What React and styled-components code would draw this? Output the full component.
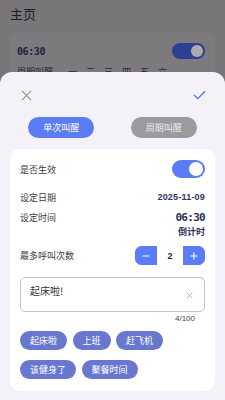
import React, { useState } from "react";
import styled, { createGlobalStyle } from "styled-components";

const Global = createGlobalStyle`
  html, body { margin: 0; padding: 0; }
  body {
    width: 225px;
    height: 400px;
    overflow: hidden;
    font-family: "Noto Sans CJK SC", "Noto Sans", sans-serif;
    background: #787679;
  }
  * { box-sizing: border-box; }
`;

const Screen = styled.div`
  position: relative;
  width: 225px;
  height: 400px;
  overflow: hidden;
  background: #787679;
`;

/* ---------- dimmed page behind the sheet ---------- */
const PageTitle = styled.div`
  height: 28px;
  padding: 4px 10px 0;
  font-size: 13px;
  line-height: 20px;
  color: #1e1e20;
`;

const BehindCard = styled.div`
  margin: 4px 10px 0;
  height: 80px;
  border-radius: 8px;
  background: #7c7a7c;
  padding: 11px 10px 0 7px;
`;

const BehindRow = styled.div`
  display: flex;
  align-items: center;
  justify-content: space-between;
`;

const BehindTime = styled.div`
  font-family: "DejaVu Sans Mono", monospace;
  font-weight: 700;
  font-size: 10px;
  letter-spacing: -0.4px;
  color: #1c2147;
`;

const BehindSwitch = styled.div`
  width: 33px;
  height: 16px;
  border-radius: 8px;
  background: #2d4190;
  padding: 2px;
  display: flex;
  justify-content: flex-end;
  &::after {
    content: "";
    width: 12px;
    height: 12px;
    border-radius: 50%;
    background: #acacac;
  }
`;

const BehindDays = styled.div`
  margin-top: 6px;
  display: flex;
  gap: 9px;
  font-size: 9px;
  color: #2a2a2c;
  span:first-child { margin-right: 6px; }
`;

/* ---------- bottom sheet ---------- */
const Sheet = styled.div`
  position: absolute;
  left: 0;
  right: 0;
  top: 72px;
  bottom: 0;
  background: #f4f1f8;
  border-radius: 12px 12px 0 0;
  display: flex;
  flex-direction: column;
`;

const SheetHeader = styled.div`
  display: flex;
  align-items: center;
  justify-content: space-between;
  padding: 16px 18px 0 18px;
  height: 30px;
`;

const IconButton = styled.button`
  border: 0;
  background: none;
  padding: 0;
  width: 16px;
  height: 14px;
  display: flex;
  align-items: center;
  justify-content: center;
  cursor: pointer;
`;

const Tabs = styled.div`
  display: flex;
  padding: 0 10px;
  margin-top: 15px;
`;

const TabCell = styled.div`
  flex: 1;
  display: flex;
  justify-content: center;
`;

const TabButton = styled.button`
  width: 66px;
  height: 21px;
  border: 0;
  border-radius: 11px;
  background: ${(p) => (p.$active ? "#5b7cf4" : "#9b9a9c")};
  color: ${(p) => (p.$active ? "#ffffff" : "#ececec")};
  font-family: "Noto Sans CJK SC", sans-serif;
  font-size: 9px;
  padding: 0;
  cursor: pointer;
`;

const Card = styled.div`
  margin: 11px 10px 0;
  background: #ffffff;
  border-radius: 10px;
  padding: 11px 10px 12px;
`;

const Row = styled.div`
  display: flex;
  align-items: center;
  justify-content: space-between;
  height: ${(p) => p.$h || 18}px;
  margin-top: ${(p) => p.$mt || 0}px;
`;

const Label = styled.span`
  font-size: 9px;
  color: #3a3a3e;
`;

const DateValue = styled.span`
  font-family: "Liberation Sans", Arial, sans-serif;
  font-weight: 700;
  font-size: 9px;
  color: #30355f;
  letter-spacing: 0.2px;
`;

const TimeValue = styled.span`
  font-family: "DejaVu Sans Mono", monospace;
  font-weight: 700;
  font-size: 11px;
  letter-spacing: -0.7px;
  color: #2a2f58;
`;

const Countdown = styled.div`
  display: flex;
  justify-content: flex-end;
  height: 12px;
  line-height: 12px;
  font-size: 9px;
  font-weight: 700;
  color: #30355f;
`;

const Switch = styled.button`
  width: 33px;
  height: 18px;
  border: 0;
  border-radius: 9px;
  padding: 2px;
  background: ${(p) => (p.$on ? "#5b7cf4" : "#c7c7cc")};
  display: flex;
  justify-content: ${(p) => (p.$on ? "flex-end" : "flex-start")};
  cursor: pointer;
  &::after {
    content: "";
    width: 14px;
    height: 14px;
    border-radius: 50%;
    background: #ffffff;
  }
`;

const Stepper = styled.div`
  display: flex;
  height: 19px;
  border-radius: 7px;
  overflow: hidden;
  background: #5b7cf4;
`;

const StepButton = styled.button`
  width: 22px;
  border: 0;
  padding: 0;
  background: #5b7cf4;
  display: flex;
  align-items: center;
  justify-content: center;
  cursor: pointer;
`;

const StepValue = styled.div`
  width: 26px;
  background: #ffffff;
  display: flex;
  align-items: center;
  justify-content: center;
  font-family: "Liberation Sans", Arial, sans-serif;
  font-weight: 700;
  font-size: 9px;
  color: #222;
`;

const TextBox = styled.div`
  margin-top: 12px;
  height: 35px;
  border: 1px solid #c4c4c8;
  border-radius: 5px;
  display: flex;
  align-items: flex-start;
  padding: 6px 10px 0 9px;
`;

const TextContent = styled.div`
  flex: 1;
  font-size: 10px;
  line-height: 13px;
  color: #333336;
`;

const ClearButton = styled.button`
  border: 0;
  background: none;
  padding: 0;
  margin-top: 8px;
  width: 8px;
  height: 8px;
  display: flex;
  cursor: pointer;
`;

const Counter = styled.div`
  display: flex;
  justify-content: flex-end;
  padding-right: 10px;
  margin-top: 1px;
  height: 12px;
  line-height: 12px;
  font-family: "Liberation Sans", Arial, sans-serif;
  font-size: 8px;
  color: #444;
`;

const Chips = styled.div`
  margin-top: 6px;
  display: flex;
  flex-wrap: wrap;
  column-gap: 5.5px;
  row-gap: 10px;
`;

const Chip = styled.button`
  height: 19px;
  border: 0;
  border-radius: 10px;
  padding: 0 10px;
  background: #6a77cf;
  color: #ffffff;
  font-family: "Noto Sans CJK SC", sans-serif;
  font-size: 9px;
  cursor: pointer;
`;

const CloseIcon = ({ size = 12, color = "#8a8a8e", w = 1.2 }) => (
  <svg width={size} height={size} viewBox="0 0 12 12">
    <path d="M1 1 L11 11 M11 1 L1 11" stroke={color} strokeWidth={w} fill="none" />
  </svg>
);

export default function App() {
  const [active, setActive] = useState(true);
  const [tab, setTab] = useState(0);
  const [count, setCount] = useState(2);
  const presets = ["起床啦", "上班", "赶飞机", "该健身了", "聚餐时间"];
  const text = "起床啦!";

  return (
    <Screen>
      <Global />
      <PageTitle>主页</PageTitle>
      <BehindCard>
        <BehindRow>
          <BehindTime>06:30</BehindTime>
          <BehindSwitch />
        </BehindRow>
        <BehindDays>
          <span>周期叫醒</span>
          {["一", "二", "三", "四", "五", "六"].map((d) => (
            <span key={d}>{d}</span>
          ))}
        </BehindDays>
      </BehindCard>

      <Sheet>
        <SheetHeader>
          <IconButton aria-label="close">
            <CloseIcon size={11} color="#8c8c90" w={1.1} />
          </IconButton>
          <IconButton aria-label="confirm">
            <svg width="13" height="10" viewBox="0 0 13 10">
              <path d="M1 5 L4.8 8.6 L12 1.2" stroke="#4f73ee" strokeWidth="1.3" fill="none" />
            </svg>
          </IconButton>
        </SheetHeader>

        <Tabs>
          <TabCell>
            <TabButton $active={tab === 0} onClick={() => setTab(0)}>单次叫醒</TabButton>
          </TabCell>
          <TabCell>
            <TabButton $active={tab === 1} onClick={() => setTab(1)}>周期叫醒</TabButton>
          </TabCell>
        </Tabs>

        <Card>
          <Row>
            <Label>是否生效</Label>
            <Switch $on={active} onClick={() => setActive(!active)} />
          </Row>
          <Row $mt={10}>
            <Label>设定日期</Label>
            <DateValue>2025-11-09</DateValue>
          </Row>
          <Row $mt={2}>
            <Label>设定时间</Label>
            <TimeValue>06:30</TimeValue>
          </Row>
          <Countdown>倒计时</Countdown>
          <Row $mt={8} $h={19}>
            <Label>最多呼叫次数</Label>
            <Stepper>
              <StepButton onClick={() => setCount(Math.max(1, count - 1))}>
                <svg width="8" height="8" viewBox="0 0 8 8">
                  <path d="M0.5 4 H7.5" stroke="#fff" strokeWidth="1.1" />
                </svg>
              </StepButton>
              <StepValue>{count}</StepValue>
              <StepButton onClick={() => setCount(count + 1)}>
                <svg width="8" height="8" viewBox="0 0 8 8">
                  <path d="M0.5 4 H7.5 M4 0.5 V7.5" stroke="#fff" strokeWidth="1.1" />
                </svg>
              </StepButton>
            </Stepper>
          </Row>
          <TextBox>
            <TextContent>{text}</TextContent>
            <ClearButton aria-label="clear">
              <CloseIcon size={7} color="#a8a8ac" w={1.3} />
            </ClearButton>
          </TextBox>
          <Counter>{text.length}/100</Counter>
          <Chips>
            {presets.map((p) => (
              <Chip key={p}>{p}</Chip>
            ))}
          </Chips>
        </Card>
      </Sheet>
    </Screen>
  );
}
